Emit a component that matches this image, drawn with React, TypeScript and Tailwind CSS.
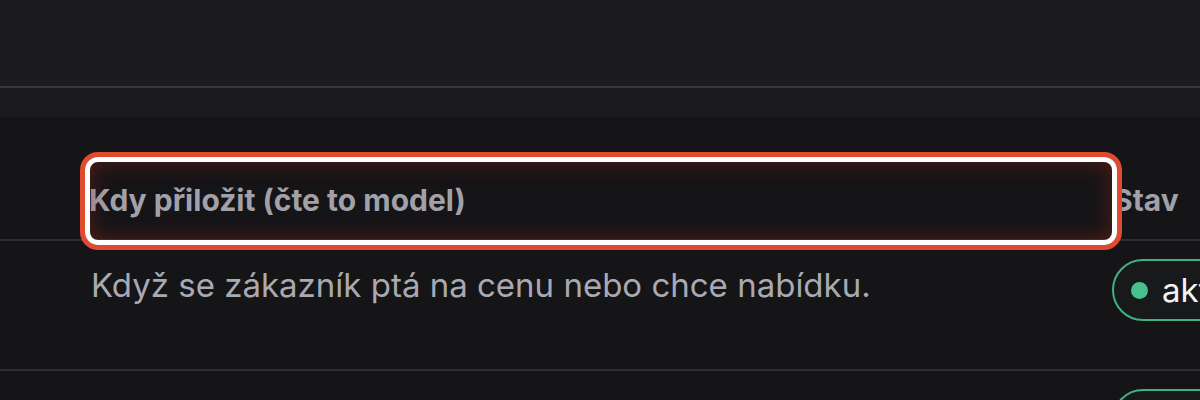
import React from 'react'

const rows = [
  { id: 1, when: 'Když se zákazník ptá na cenu nebo chce nabídku.', status: 'aktivní' },
  { id: 2, when: 'Když zákazník chce vidět referenční projekty.', status: 'aktivní' },
]

const StatusBadge = ({ label }: { label: string }) => (
  <span className="inline-flex h-[62px] items-center gap-[14px] rounded-full border-2 border-[#3fb27f] bg-[#18191a] pl-[17px] pr-[24px] text-[33px] leading-none text-[#f4f4f5]">
    <span className="h-[17px] w-[17px] shrink-0 rounded-full bg-[#47c08b]" />
    {label}
  </span>
)

const App = () => {
  return (
    <div
      className="h-[400px] w-[1200px] overflow-hidden bg-[#151417]"
      style={{ fontFamily: 'Inter, "Noto Sans", sans-serif' }}
    >
      <div className="h-[88px] border-b-2 border-[#37363b] bg-[#1c1b20]" />
      <div className="h-[29px] bg-[#1b1a1f]" />

      <div className="relative">
        {/* header */}
        <div className="flex h-[124px] border-b-2 border-[#2e2d32] pt-[63px]">
          <div className="w-[1110px] shrink-0 pl-[89px] text-[30px] font-bold leading-[40px] text-[#a1a1aa]">
            Kdy přiložit (čte to model)
          </div>
          <div className="shrink-0 pl-[3px] text-[30px] font-bold leading-[40px] text-[#a1a1aa]">Stav</div>
        </div>

        {rows.map((row) => (
          <div key={row.id} className="flex h-[130px] border-b-2 border-[#2e2d32] pt-[18px]">
            <div className="w-[1112px] shrink-0 pl-[91px] pt-[2px] text-[33px] leading-[48px] text-[#a9a9b1]">
              {row.when}
            </div>
            <div className="shrink-0">
              <StatusBadge label={row.status} />
            </div>
          </div>
        ))}

        {/* highlight overlay */}
        <div className="absolute left-[80px] top-[35px] h-[98px] w-[1042px] rounded-[18px] border-[5px] border-[#e04a2f]">
          <div className="h-full w-full rounded-[13px] border-[5px] border-white shadow-[inset_0_0_22px_rgba(160,40,25,0.45)]" />
        </div>
      </div>
    </div>
  )
}

export default App
